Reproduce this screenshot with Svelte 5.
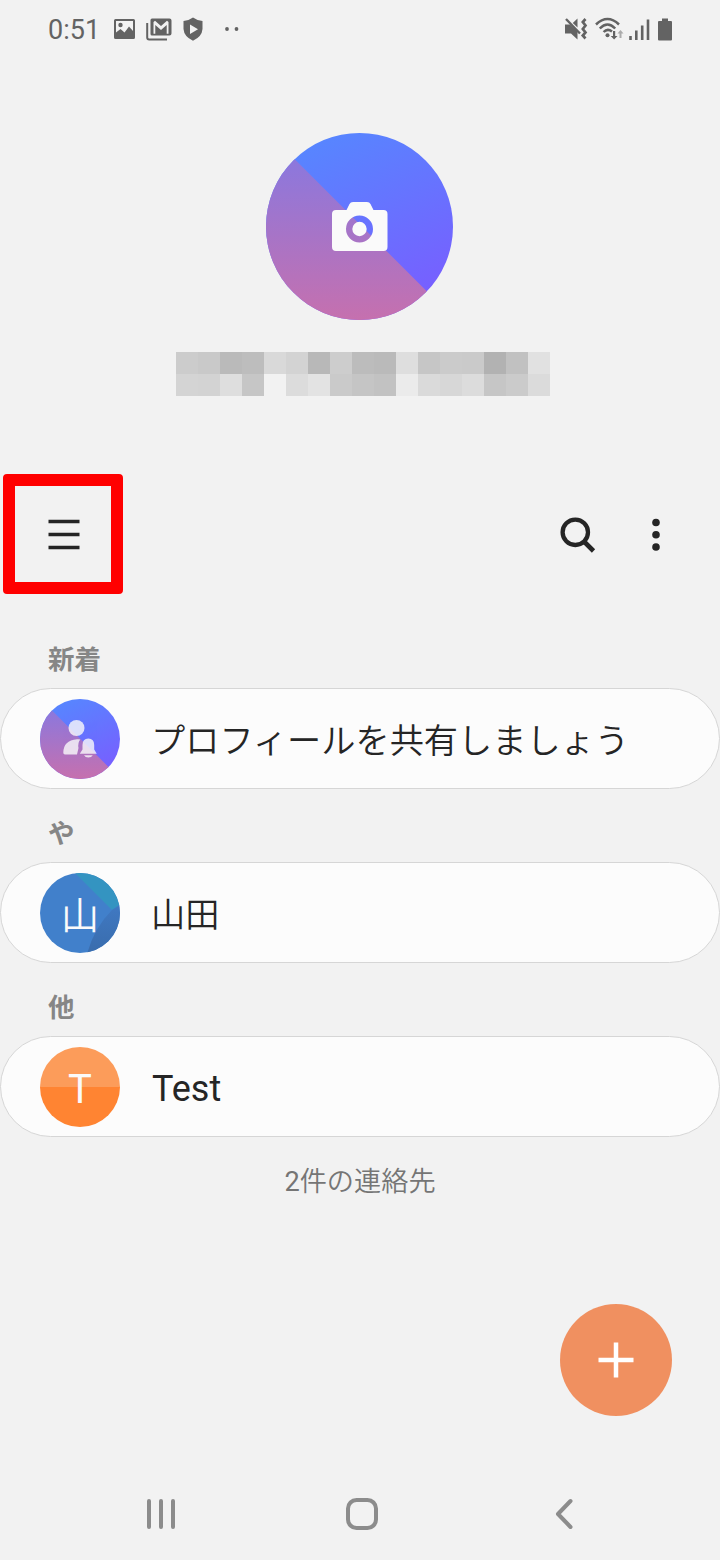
<script lang="ts">
  type Contact = {
    name: string;
    avatar: 'profile' | 'blue' | 'orange';
    initial?: string;
  };

  const sections: { label: string; contacts: Contact[] }[] = [
    { label: '新着', contacts: [{ name: 'プロフィールを共有しましょう', avatar: 'profile' }] },
    { label: 'や', contacts: [{ name: '山田', avatar: 'blue', initial: '山' }] },
    { label: '他', contacts: [{ name: 'Test', avatar: 'orange', initial: 'T' }] }
  ];

  // Grey levels of the pixelated owner name, one row per line
  const mosaic = [
    [204, 201, 186, 189, 217, 211, 184, 205, 188, 186, 222, 198, 203, 202, 178, 193, 225],
    [212, 211, 222, 198, 242, 220, 227, 202, 197, 194, 235, 218, 215, 220, 198, 203, 219]
  ];
</script>

<div class="screen">
  <header class="status-bar">
    <span class="clock">0:51</span>
    <svg class="image-icon" width="21" height="20" viewBox="0 0 21 20">
      <path fill-rule="evenodd" d="M1.500 0H19.500Q21 0 21 1.500V18.500Q21 20 19.500 20H1.500Q0 20 0 18.500V1.500Q0 0 1.500 0ZM2 2V13.500L6.500 10L10.500 13.500L15 7.500L19 12V2ZM6.500 3.800A2.200 2.200 0 1 1 6.500 8.200A2.200 2.200 0 1 1 6.500 3.800Z" />
    </svg>
    <svg class="gmail-icon" width="26" height="23" viewBox="0 0 26 23">
      <path d="M1.200 5V19.500Q1.200 21.500 3.200 21.500H21" fill="none" stroke="currentColor" stroke-width="2" />
      <path fill-rule="evenodd" d="M6 0.500H23.500Q25.500 0.500 25.500 2.500V15.500Q25.500 17.500 23.500 17.500H6Q4.500 17.500 4.500 16V2Q4.500 0.500 6 0.500ZM7.500 4V15.800H9.300V7L15 12L20.700 7V15.800H22.500V4L21 2.800L15 8L9 2.800Z" />
    </svg>
    <svg class="shield-icon" width="20" height="24" viewBox="0 0 20 24">
      <path fill-rule="evenodd" d="M10 0.500Q14 3.500 19.500 4V12Q19 19.500 10 23.800Q1 19.500 0.500 12V4Q6 3.500 10 0.500ZM7 7.500V17L15 12.200Z" />
    </svg>
    <svg class="more-icon" width="16" height="6" viewBox="0 0 16 6">
      <circle cx="3" cy="3" r="1.900" />
      <circle cx="12.500" cy="3" r="1.900" />
    </svg>

    <div class="status-right">
      <svg width="24" height="24" viewBox="0 0 24 24">
        <path d="M1 7.500H6L13.500 14.500V22.500L7 16.500H1ZM8.800 6L13.500 1.500V10.500Z" />
        <path d="M2 2L16 16.500" fill="none" stroke="currentColor" stroke-width="2.400" />
        <path d="M21.500 2L18.800 5L21.500 8.500L18.800 12L21.500 15.500L18.800 18.500L21.500 21.500" fill="none" stroke="currentColor" stroke-width="2.700" />
      </svg>
      <svg class="wifi-icon" width="29" height="24" viewBox="0 0 29 24">
        <g fill="none" stroke="currentColor" stroke-width="2.500">
          <path d="M1 7.500Q12.500 -3.500 24 7.500" />
          <path d="M4.800 11.500Q12.500 3.500 20.200 11.500" />
          <path d="M8.600 15Q12.500 11 17 14.500" />
        </g>
        <circle cx="12.500" cy="18.300" r="2" />
        <path d="M18 14H20.200V19H22.500L19.100 22.500L15.700 19H18Z" />
        <path class="faint" d="M24.500 21V16.500H22.500L25.500 13L28.500 16.500H26.500V21Z" />
      </svg>
      <svg class="signal-icon" width="21" height="23" viewBox="0 0 21 23">
        <path d="M1.500 18V22M7.300 12.500V22M13.200 7.500V22M19 1.500V22" fill="none" stroke="currentColor" stroke-width="2.600" />
      </svg>
      <svg class="battery-icon" width="14" height="23" viewBox="0 0 14 23">
        <path d="M4 0.500H10V3H13Q14 3 14 4V21.500Q14 22.500 13 22.500H1Q0 22.500 0 21.500V4Q0 3 1 3H4Z" />
      </svg>
    </div>
  </header>

  <section class="owner">
    <svg class="owner-photo" width="188" height="188" viewBox="0 0 188 188">
      <defs>
        <linearGradient id="ownerTop" x1="0.200" y1="0" x2="0.700" y2="1">
          <stop offset="0" stop-color="#5588ff" />
          <stop offset="1" stop-color="#795dff" />
        </linearGradient>
        <linearGradient id="ownerBottom" x1="0" y1="0" x2="0" y2="1">
          <stop offset="0.100" stop-color="#8878e0" />
          <stop offset="1" stop-color="#c670ae" />
        </linearGradient>
        <clipPath id="ownerClip"><circle cx="93.500" cy="93.500" r="93.500" /></clipPath>
      </defs>
      <g clip-path="url(#ownerClip)">
        <rect width="188" height="188" fill="url(#ownerTop)" />
        <path d="M0 -2.500L188 185.500V188H0Z" fill="url(#ownerBottom)" />
      </g>
      <path class="camera" fill-rule="evenodd" d="M70 77H80.500L83.500 71Q84.500 69 87 69H101Q103.500 69 104.500 71L107.500 77H117.500Q121.500 77 121.500 81V114Q121.500 118 117.500 118H70Q66 118 66 114V81Q66 77 70 77ZM93.500 82.500A13.500 13.500 0 1 0 93.500 109.500A13.500 13.500 0 1 0 93.500 82.500Z" />
      <circle class="camera" cx="93.500" cy="96" r="7.200" />
    </svg>

    <div class="owner-name">
      {#each mosaic as row}
        {#each row as level}
          <span style="background-color: rgb({level}, {level}, {level});"></span>
        {/each}
      {/each}
    </div>
  </section>

  <nav class="toolbar">
    <button class="menu-button" aria-label="menu">
      <svg width="32" height="32" viewBox="0 0 32 32">
        <path d="M0.500 3.500H31.500M0.500 16.500H31.500M0.500 29.500H31.500" fill="none" stroke="currentColor" stroke-width="3.500" />
      </svg>
    </button>
    <div class="toolbar-actions">
      <svg width="36" height="36" viewBox="0 0 36 36">
        <circle cx="15.300" cy="15.300" r="12.700" fill="none" stroke="currentColor" stroke-width="4.300" />
        <path d="M24 24.500L33.500 34" fill="none" stroke="currentColor" stroke-width="4.600" />
      </svg>
      <svg width="8" height="34" viewBox="0 0 8 34">
        <circle cx="4" cy="4.500" r="3.800" />
        <circle cx="4" cy="16.800" r="3.800" />
        <circle cx="4" cy="29" r="3.800" />
      </svg>
    </div>
  </nav>

  <main>
    {#each sections as section}
      <h2>{section.label}</h2>
      {#each section.contacts as contact}
        <div class="card">
          <div class="avatar {contact.avatar}">
            {#if contact.avatar === 'profile'}
              <svg width="80" height="80" viewBox="0 0 80 80">
                <rect width="80" height="80" fill="url(#ownerTop)" />
                <path d="M0 -0.500L80 79.500V80H0Z" fill="url(#ownerBottom)" />
                <g class="person">
                  <circle cx="36.500" cy="29" r="8" />
                  <path d="M40.300 40.500Q37.500 44 38.500 49L37 55.500H25Q23.300 55.500 23.300 53.800Q23.300 41.500 37 40.300Q39 40 40.300 40.500Z" />
                  <path d="M39.800 54.800L42.500 50.500V46Q42.500 39.500 48.300 39.500Q54.200 39.500 54.200 46V50.500L56.800 54.800ZM44 56.300H52.800Q51.500 58.500 48.300 58.500Q45.300 58.500 44 56.300Z" />
                </g>
              </svg>
            {:else}
              {#if contact.avatar === 'blue'}
                <svg width="80" height="80" viewBox="0 0 80 80">
                  <defs>
                    <linearGradient id="blueShade" x1="0" y1="0" x2="0" y2="1">
                      <stop offset="0" stop-color="#4079c3" />
                      <stop offset="1" stop-color="#396cac" />
                    </linearGradient>
                  </defs>
                  <path d="M34 -1L72 37L81 31V-1Z" fill="#3494c1" />
                  <path d="M81 31L72 37Q54 55 47 81H81Z" fill="url(#blueShade)" />
                </svg>
              {/if}
              <span class="initial">{contact.initial}</span>
            {/if}
          </div>
          <span class="name" class:latin={/^[A-Za-z]/.test(contact.name)}>{contact.name}</span>
        </div>
      {/each}
    {/each}
    <p class="count"><span class="number">2</span>件の連絡先</p>
  </main>

  <button class="add-button" aria-label="add">
    <svg width="36" height="36" viewBox="0 0 36 36">
      <path d="M18 0.500V35.500M0.500 18H35.500" fill="none" stroke="currentColor" stroke-width="4.500" />
    </svg>
  </button>

  <footer class="nav-bar">
    <svg width="30" height="32" viewBox="0 0 30 32">
      <path d="M3 3V29M15 3V29M27 3V29" />
    </svg>
    <svg width="32" height="32" viewBox="0 0 32 32">
      <rect x="2" y="2" width="28" height="28" rx="8.500" />
    </svg>
    <svg width="28" height="32" viewBox="0 0 28 32">
      <path d="M23.500 3L11 16L23.500 29" />
    </svg>
  </footer>
</div>

<style>
  :global(body) {
    background-color: #f2f2f2;
  }

  .screen {
    display: flex;
    flex-direction: column;
    width: 720px;
    height: 1560px;
    background-color: #f2f2f2;
    color: #252525;
    font-family: Roboto, "Noto Sans CJK JP", sans-serif;
    overflow: hidden;
  }

  svg {
    display: block;
    flex: none;
    fill: currentColor;
  }

  button {
    display: flex;
    align-items: center;
    justify-content: center;
    box-sizing: border-box;
    padding: 0;
    border: 0;
    background: none;
    color: inherit;
  }

  .status-bar {
    display: flex;
    align-items: center;
    height: 58px;
    padding: 0 48px;
    color: #636363;
  }

  .clock {
    width: 66px;
    padding-top: 2px;
    font-size: 27px;
    line-height: 32px;
  }

  .gmail-icon {
    margin-left: 11px;
  }

  .shield-icon {
    margin-left: 11px;
  }

  .more-icon {
    margin-left: 21px;
  }

  .status-right {
    display: flex;
    align-items: center;
    margin-left: auto;
  }

  .wifi-icon {
    margin-left: 7px;
  }

  .faint {
    opacity: 0.5;
  }

  .signal-icon {
    margin-left: 5px;
  }

  .battery-icon {
    margin-left: 8px;
  }

  .owner {
    display: flex;
    flex-direction: column;
    align-items: center;
    height: 341px;
    padding-top: 75px;
  }

  .camera {
    fill: #fafafa;
  }

  .owner-name {
    display: grid;
    grid-template-columns: repeat(17, 22px);
    grid-auto-rows: 22px;
    margin: 31px 0 0 6px;
  }

  .toolbar {
    display: flex;
    align-items: center;
    justify-content: space-between;
    height: 120px;
    padding: 0 60px 0 3px;
  }

  .menu-button {
    width: 120px;
    height: 120px;
    border: 12px solid #ff0000;
    border-radius: 4px;
  }

  .menu-button svg {
    margin: 0 0 1px 2px;
  }

  .toolbar-actions {
    display: flex;
    align-items: center;
    gap: 56px;
    padding-top: 2px;
  }

  main {
    padding-top: 21px;
  }

  h2 {
    height: 73px;
    box-sizing: border-box;
    margin: 0;
    padding: 26px 48px 0;
    color: #868686;
    font-size: 26.500px;
    font-weight: 700;
    line-height: 38px;
  }

  .card {
    display: flex;
    align-items: center;
    box-sizing: border-box;
    height: 101px;
    padding: 0 39px;
    border: 1px solid #d6d6d6;
    border-radius: 51px;
    background-color: #fcfcfc;
  }

  .avatar {
    display: grid;
    place-items: center;
    width: 80px;
    height: 80px;
    border-radius: 50%;
    overflow: hidden;
    color: #fafafa;
    font-size: 40px;
  }

  .avatar > * {
    grid-area: 1 / 1;
  }

  .initial {
    padding-top: 6px;
    line-height: 74px;
    z-index: 1;
  }

  .avatar.blue {
    background-color: #4180cb;
    font-size: 38px;
    font-weight: 350;
  }

  .avatar.orange {
    background: linear-gradient(#fc9c5a 50%, #ff8432 50%);
  }

  .person {
    fill: #fafafa;
    opacity: 0.8;
  }

  .name {
    margin-left: 31px;
    padding-top: 4px;
    font-size: 34.200px;
    font-weight: 350;
    line-height: 50px;
  }

  .name.latin {
    margin-left: 32px;
    padding-top: 5px;
    font-size: 36px;
    font-weight: 400;
  }

  .count {
    margin: 25px 0 0;
    color: #757575;
    font-size: 27.200px;
    font-weight: 350;
    line-height: 40px;
    text-align: center;
  }

  .number {
    font-weight: 400;
  }

  .add-button {
    flex: none;
    width: 112px;
    height: 112px;
    margin: auto 48px 0 auto;
    border-radius: 50%;
    background-color: #f09060;
    color: #fff;
  }

  .nav-bar {
    display: flex;
    flex: none;
    align-items: center;
    justify-content: space-between;
    height: 92px;
    margin-top: 52px;
    padding: 0 145px 0 146px;
    color: #8c8c8c;
  }

  .nav-bar svg {
    fill: none;
    stroke: currentColor;
    stroke-width: 4;
    stroke-linecap: round;
    stroke-linejoin: round;
  }
</style>
